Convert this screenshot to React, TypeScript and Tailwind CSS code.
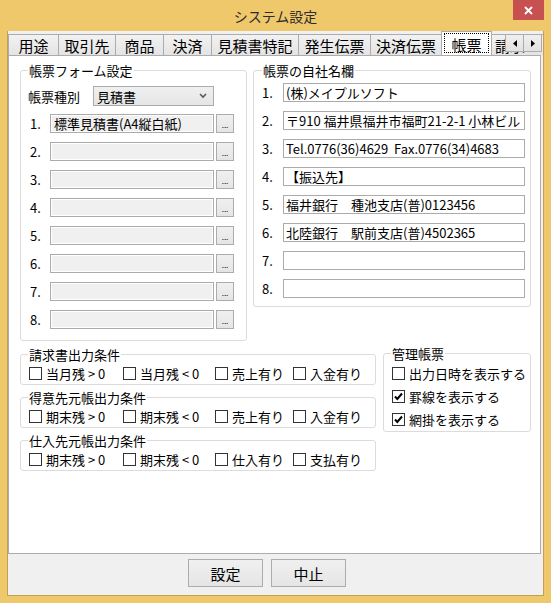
import React from 'react'

const tabs = [
  { label: '用途', w: 'w-[50px]' },
  { label: '取引先', w: 'w-[57px]' },
  { label: '商品', w: 'w-[48px]' },
  { label: '決済', w: 'w-[48px]' },
  { label: '見積書特記', w: 'w-[87px]' },
  { label: '発生伝票', w: 'w-[72px]' },
  { label: '決済伝票', w: 'w-[71px]' },
]

const formRows = ['標準見積書(A4縦白紙)', '', '', '', '', '', '', '']

const companyRows = [
  '(株)メイプルソフト',
  '〒910 福井県福井市福町21-2-1 小林ビル',
  'Tel.0776(36)4629  Fax.0776(34)4683',
  '【振込先】',
  '福井銀行　種池支店(普)0123456',
  '北陸銀行　駅前支店(普)4502365',
  '',
  '',
]

const conditionGroups = [
  { title: '請求書出力条件', items: ['当月残 > 0', '当月残 < 0', '売上有り', '入金有り'] },
  { title: '得意先元帳出力条件', items: ['期末残 > 0', '期末残 < 0', '売上有り', '入金有り'] },
  { title: '仕入先元帳出力条件', items: ['期末残 > 0', '期末残 < 0', '仕入有り', '支払有り'] },
]

const itemWidths = ['w-[94px]', 'w-[92px]', 'w-[78px]', '']

function Check({ checked, label }: { checked?: boolean; label: string }) {
  return (
    <div className="flex items-center h-[15px]">
      <span className="w-[13px] h-[13px] border border-[#333] bg-white flex items-center justify-center shrink-0">
        {checked && (
          <svg width="11" height="11" viewBox="0 0 11 11">
            <path d="M2 5.5 L4.3 8 L9 2.5" fill="none" stroke="#000" strokeWidth="2" />
          </svg>
        )}
      </span>
      <span className="ml-[4px] text-[13px] leading-none whitespace-pre">{label}</span>
    </div>
  )
}

function Group({ title, className, children, legendLeft = 'left-[7px]' }: { title: string; className: string; children: React.ReactNode; legendLeft?: string }) {
  return (
    <div className={`relative border border-[#DCDCDC] rounded-[3px] ${className}`}>
      <span className={`absolute ${legendLeft} -top-[9px] bg-white px-[1px] text-[13px] leading-[17px] whitespace-nowrap`}>{title}</span>
      {children}
    </div>
  )
}

export default function App() {
  return (
    <div className="w-[551px] h-[603px] bg-[#F0C86C] flex flex-col px-[7px] pb-[7px] font-['Noto_Sans_CJK_JP','Noto_Sans',sans-serif] text-black">
      {/* Title bar */}
      <div className="h-[31px] shrink-0 relative flex items-center justify-center">
        <span className="text-[14px] text-[#2b2b2b] leading-none">システム設定</span>
        <div className="absolute right-0 top-0 w-[31px] h-[20px] bg-[#C75050] flex items-center justify-center">
          <svg width="9" height="9" viewBox="0 0 9 9">
            <path d="M1 1 L8 8 M8 1 L1 8" stroke="#fff" strokeWidth="1.8" />
          </svg>
        </div>
      </div>

      {/* Client area */}
      <div className="flex-1 bg-[#F0F0F0] border-x border-b border-[#C2A154] flex flex-col">
        {/* Tab strip */}
        <div className="relative h-[24px] flex items-end overflow-hidden shrink-0 z-10">
          {tabs.map(t => (
            <div
              key={t.label}
              className={`${t.w} h-[21px] shrink-0 border-t border-l border-[#ACACAC] bg-gradient-to-b from-[#F2F2F2] to-[#E4E4E4] flex items-center justify-center text-[15px] leading-none`}
            >
              {t.label}
            </div>
          ))}
          <div className="w-[51px] h-[25px] -mb-px shrink-0 relative border-t border-l border-r border-[#ACACAC] bg-white flex items-center justify-center text-[15px] leading-none">
            <span className="absolute left-[2px] right-[2px] top-[1px] bottom-[3px] border border-dotted border-black" />
            帳票
          </div>
          <div className="w-[60px] h-[21px] shrink-0 bg-gradient-to-b from-[#F2F2F2] to-[#E4E4E4] border-t border-[#ACACAC] flex items-center pl-[3px] text-[15px] leading-none">
            請求
          </div>
          <div className="absolute right-[1px] top-[3px] flex">
            <div className="w-[19px] h-[18px] border border-[#ACACAC] bg-gradient-to-b from-[#F0F0F0] to-[#E2E2E2] flex items-center justify-center">
              <svg width="4" height="7" viewBox="0 0 4 7"><path d="M4 0 L0 3.5 L4 7 Z" fill="#000" /></svg>
            </div>
            <div className="w-[19px] h-[18px] -ml-px border border-[#ACACAC] bg-gradient-to-b from-[#F0F0F0] to-[#E2E2E2] flex items-center justify-center">
              <svg width="4" height="7" viewBox="0 0 4 7"><path d="M0 0 L4 3.5 L0 7 Z" fill="#000" /></svg>
            </div>
          </div>
        </div>

        {/* Tab page */}
        <div className="w-[533px] h-[499px] shrink-0 bg-white border border-[#ACACAC] pt-[14px] pl-[11px]">
          <div className="flex items-start gap-[6px]">
            {/* 帳票フォーム設定 */}
            <Group title="帳票フォーム設定" className="w-[227px] h-[271px]">
              <div className="pt-[15px] pl-[7px]">
                <div className="flex items-center h-[20px]">
                  <span className="w-[65px] text-[13px] leading-none">帳票種別</span>
                  <div className="w-[121px] h-[20px] border border-[#ACACAC] bg-gradient-to-b from-[#F0F0F0] to-[#E5E5E5] flex items-center justify-between pl-[3px] pr-[6px]">
                    <span className="text-[13px] leading-none">見積書</span>
                    <svg width="8" height="6" viewBox="0 0 8 6">
                      <path d="M1 1 L4 4 L7 1" fill="none" stroke="#5a5a5a" strokeWidth="1.6" />
                    </svg>
                  </div>
                </div>
                <div className="flex flex-col gap-[9px] mt-[8px]">
                  {formRows.map((v, i) => (
                    <div key={i} className="flex items-center h-[19px]">
                      <span className="w-[22px] pl-[2px] text-[13px] leading-none">{i + 1}.</span>
                      <div className="w-[164px] h-[19px] border border-[#ABABAB] bg-[#F0F0F0] shadow-[inset_0_0_0_1px_#fff] flex items-center px-[3px] text-[13px] leading-none whitespace-nowrap overflow-hidden">
                        {v}
                      </div>
                      <div className="ml-[2px] w-[18px] h-[19px] border border-[#ACACAC] bg-gradient-to-b from-[#F0F0F0] to-[#E5E5E5] flex items-end justify-center pb-[3px] text-[8px] leading-none">
                        ...
                      </div>
                    </div>
                  ))}
                </div>
              </div>
            </Group>

            {/* 帳票の自社名欄 */}
            <Group title="帳票の自社名欄" className="w-[278px] h-[237px]" legendLeft="left-[8px]">
              <div className="pt-[12px] pl-[8px] flex flex-col gap-[9px]">
                {companyRows.map((v, i) => (
                  <div key={i} className="flex items-center h-[19px]">
                    <span className="w-[21px] text-[13px] leading-none">{i + 1}.</span>
                    <div className="w-[242px] h-[19px] border border-[#ABABAB] bg-white flex items-center px-[2px] text-[13px] leading-none whitespace-pre overflow-hidden">
                      {v}
                    </div>
                  </div>
                ))}
              </div>
            </Group>
          </div>

          <div className="flex items-start gap-[7px] mt-[13px]">
            <div className="w-[356px] flex flex-col gap-[12px]">
              {conditionGroups.map(g => (
                <Group key={g.title} title={g.title} className="h-[31px]">
                  <div className="flex pt-[11px] pl-[8px]">
                    {g.items.map((it, i) => (
                      <div key={it + i} className={itemWidths[i]}>
                        <Check label={it} />
                      </div>
                    ))}
                  </div>
                </Group>
              ))}
            </div>
            <Group title="管理帳票" className="w-[148px] h-[79px] -mt-px">
              <div className="pt-[12px] pl-[8px] flex flex-col gap-[8px]">
                <Check label="出力日時を表示する" />
                <Check checked label="罫線を表示する" />
                <Check checked label="網掛を表示する" />
              </div>
            </Group>
          </div>
        </div>

        {/* Buttons */}
        <div className="flex gap-[8px] pl-[180px] pt-[5px]">
          <button className="w-[75px] h-[28px] border border-[#ACACAC] bg-gradient-to-b from-[#F0F0F0] to-[#E5E5E5] text-[15px] leading-none">設定</button>
          <button className="w-[75px] h-[28px] border border-[#ACACAC] bg-gradient-to-b from-[#F0F0F0] to-[#E5E5E5] text-[15px] leading-none">中止</button>
        </div>
      </div>
    </div>
  )
}
